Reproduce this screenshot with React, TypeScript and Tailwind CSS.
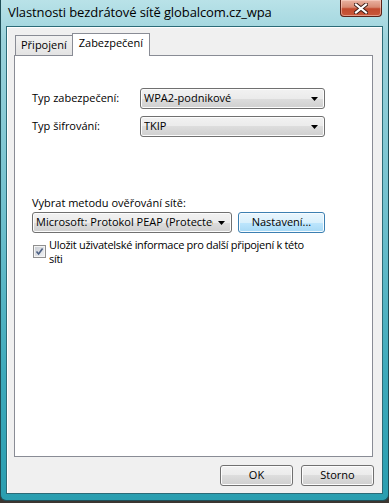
import React from "react";

const font = { fontFamily: '"Segoe UI", "Open Sans", "Noto Sans", sans-serif' };

function Arrow() {
  return (
    <svg width="7" height="4" viewBox="0 0 7 4" className="shrink-0">
      <polygon points="0,0 7,0 3.5,4" fill="#000" />
    </svg>
  );
}

function Combo({ text, className }: { text: string; className: string }) {
  return (
    <div
      className={
        "flex items-center rounded-[3px] border border-[#707070] bg-[linear-gradient(#f2f2f2_0%,#ebebeb_50%,#dddddd_50%,#cfcfcf_100%)] shadow-[inset_0_0_0_1px_#fcfcfc] pl-[3px] pr-[6px] overflow-hidden " +
        className
      }
    >
      <span className="flex-1 min-w-0 mr-[5px] whitespace-nowrap overflow-hidden text-black">{text}</span>
      <Arrow />
    </div>
  );
}

function Btn({ text, className, hot }: { text: string; className: string; hot?: boolean }) {
  return (
    <div
      className={
        "flex items-center justify-center rounded-[3px] border text-black " +
        (hot
          ? "border-[#3c7fb1] bg-[linear-gradient(#eaf6fd_0%,#d9f0fc_50%,#bee6fd_50%,#a7d9f5_100%)] shadow-[inset_0_0_0_1px_#f7fcff] "
          : "border-[#707070] bg-[linear-gradient(#f2f2f2_0%,#ebebeb_50%,#dddddd_50%,#cfcfcf_100%)] shadow-[inset_0_0_0_1px_#fcfcfc] ") +
        className
      }
    >
      {text}
    </div>
  );
}

export default function App() {
  return (
    <div className="w-[389px] h-[503px] bg-[#3b3631] overflow-hidden text-[11px]" style={font}>
      <div className="h-[501px] flex flex-col rounded-b-[6px] border border-t-0 border-[#1f4f58] bg-[linear-gradient(#b9e2e8_0%,#9cd3dc_8%,#74c2cf_40%,#3eaabb_75%,#2a9eb0_100%)]">
        {/* title bar */}
        <div className="h-[26px] flex items-start justify-between shrink-0">
          <div className="pl-[7px] pt-[4px] text-[13px] text-black leading-[16px] tracking-[-0.1px]">
            Vlastnosti bezdrátové sítě globalcom.cz_wpa
          </div>
          <div className="mr-[6px] w-[42px] h-[17px] rounded-b-[4px] border border-t-0 border-[#5b2218] bg-[linear-gradient(#eab3a2_0%,#d88a73_45%,#c24a2e_55%,#c9583a_100%)] shadow-[inset_0_0_0_1px_rgba(255,220,210,0.5)] flex items-center justify-center">
            <svg width="14" height="11" viewBox="0 0 14 11">
              <path d="M2 1.5 L12 9.5 M12 1.5 L2 9.5" stroke="#3a1a14" strokeWidth="4" strokeLinecap="square" />
              <path d="M2 1.5 L12 9.5 M12 1.5 L2 9.5" stroke="#ffffff" strokeWidth="2.2" strokeLinecap="square" />
            </svg>
          </div>
        </div>
        {/* client area */}
        <div className="mx-[5px] mb-[6px] flex-1 flex flex-col border border-[#2c6b77] bg-[#f0f0f0] shadow-[inset_1px_1px_0_#ffffff]">
          {/* tabs */}
          <div className="flex items-end pl-[7px] pt-[5px] h-[28px] shrink-0">
            <div className="h-[20px] -mr-px ml-px flex items-center px-[5px] border border-b-0 border-[#898c95] bg-[linear-gradient(#f2f2f2,#e3e3e3)] text-black">
              Připojení
            </div>
            <div className="h-[23px] relative z-10 -mb-px flex items-start pt-[1px] px-[6px] border border-b-0 border-[#898c95] bg-white text-black">
              Zabezpečení
            </div>
          </div>
          {/* panel */}
          <div className="ml-[7px] w-[359px] h-[402px] shrink-0 border border-[#898c95] bg-white flex flex-col pl-[17px] pt-[32px]">
            <div className="grid grid-cols-[108px_185px] gap-y-[7px] items-center">
              <div>Typ zabezpečení:</div>
              <Combo text="WPA2-podnikové" className="h-[21px]" />
              <div>Typ šifrování:</div>
              <Combo text="TKIP" className="h-[21px]" />
            </div>
            <div className="mt-[59px] leading-[14px]">Vybrat metodu ověřování sítě:</div>
            <div className="mt-[2px] flex gap-[6px]">
              <Combo text="Microsoft: Protokol PEAP (Protected EAP)" className="w-[200px] h-[21px]" />
              <Btn text="Nastavení..." hot className="w-[87px] h-[21px]" />
            </div>
            <div className="mt-[5px] flex items-start">
              <div className="mt-[7px] ml-px w-[13px] h-[13px] border border-[#8f8f8f] bg-[#f4f4f4] p-px shrink-0">
                <div className="w-full h-full bg-[linear-gradient(135deg,#cbcfd5,#eef0f2)] flex items-center justify-center">
                  <svg width="9" height="9" viewBox="0 0 9 9">
                    <path d="M1.5 4.5 L3.6 7 L7.6 1.5" stroke="#4d6185" strokeWidth="1.6" fill="none" />
                  </svg>
                </div>
              </div>
              <div className="ml-[3px] leading-[14px] whitespace-nowrap tracking-[-0.3px]">
                Uložit uživatelské informace pro další připojení k této
                <br />
                síti
              </div>
            </div>
          </div>
          {/* buttons */}
          <div className="flex justify-end gap-[8px] pr-[8px] mt-[8px]">
            <Btn text="OK" className="w-[73px] h-[21px]" />
            <Btn text="Storno" className="w-[73px] h-[21px]" />
          </div>
        </div>
      </div>
    </div>
  );
}
